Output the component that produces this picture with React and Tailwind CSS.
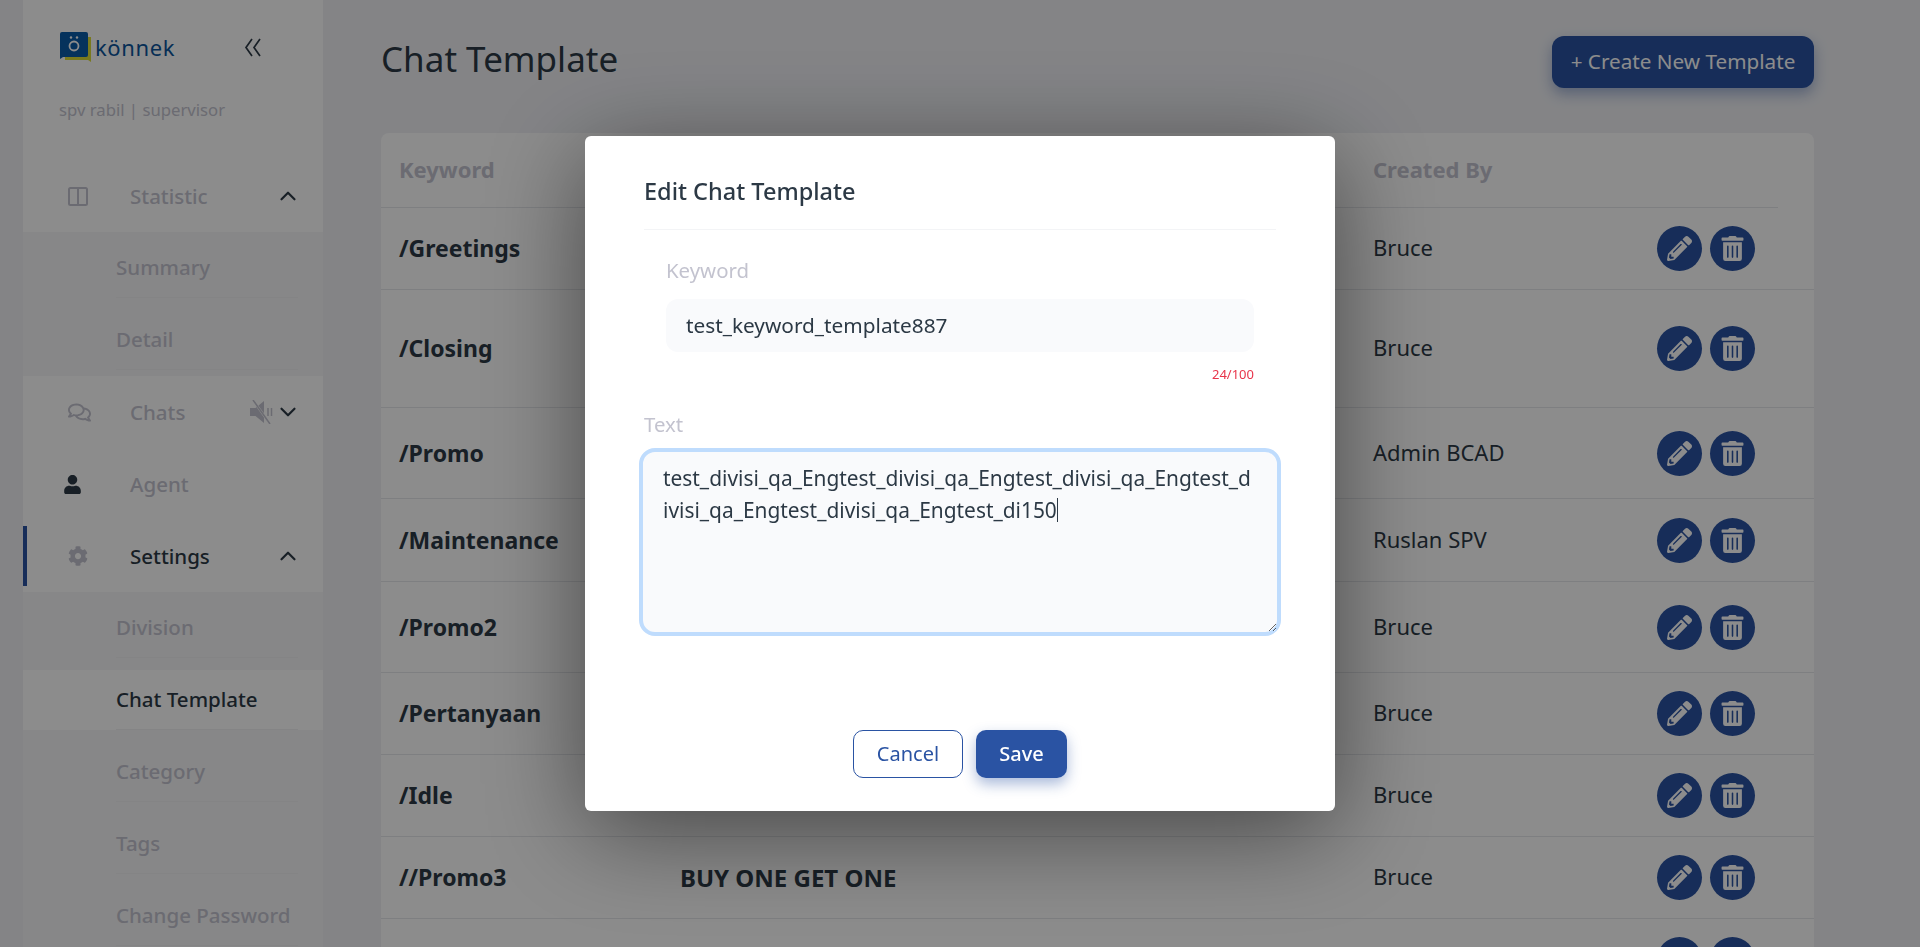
import React from "react";
import { FaCog, FaPencilAlt, FaRegComments, FaTrashAlt, FaUser } from "react-icons/fa";
import { ChevronDown, ChevronUp } from "lucide-react";

const rows = [
    { keyword: "/Greetings", author: "Bruce", height: "h-[82px]" },
    { keyword: "/Closing", author: "Bruce", height: "h-[118px]" },
    { keyword: "/Promo", author: "Admin BCAD", height: "h-[91px]" },
    { keyword: "/Maintenance", author: "Ruslan SPV", height: "h-[83px]" },
    { keyword: "/Promo2", author: "Bruce", height: "h-[91px]" },
    { keyword: "/Pertanyaan", author: "Bruce", height: "h-[82px]" },
    { keyword: "/Idle", author: "Bruce", height: "h-[82px]" },
    { keyword: "//Promo3", title: "BUY ONE GET ONE", author: "Bruce", height: "h-[82px]" },
    { keyword: "", author: "", height: "h-[82px]" },
];

const ColumnsIcon = () => (
    <svg width="20" height="19" viewBox="0 0 20 19" fill="none" stroke="currentColor" strokeWidth="2">
        <rect x="1" y="1" width="18" height="17" rx="1.5" />
        <path d="M10 1v17" />
    </svg>
);

const MuteIcon = () => (
    <svg width="24" height="24" viewBox="0 0 24 24">
        <path d="M0 8h5.500L14 1v22l-8.500-7H0z" fill="#c3c3cf" />
        <path d="M18 8v8M21.500 8v8" stroke="#c3c3cf" strokeWidth="1.500" />
        <path d="M3 0l17 24" stroke="#ffffff" strokeWidth="2.500" />
        <path d="M3 0l17 24" stroke="#c3c3cf" strokeWidth="1.500" />
    </svg>
);

const Logo = () => (
    <svg width="32" height="32" viewBox="0 0 32 32">
        <path d="M5 6h26v25l-3-2H5z" fill="#dcdc38" />
        <path d="M2 1h24a2 2 0 0 1 2 2v21a2 2 0 0 1-2 2H3l-3 2V3a2 2 0 0 1 2-2z" fill="#0a5ca8" />
        <circle cx="14" cy="15" r="4.500" fill="none" stroke="#ffffff" strokeWidth="1.800" />
        <circle cx="11" cy="6.500" r="1.200" fill="#ffffff" />
        <circle cx="17" cy="6.500" r="1.200" fill="#ffffff" />
    </svg>
);

function MenuRow({ icon, label, active, chevron, extra, iconClass = "" }) {
    return (
        <div className="h-[72px] py-[6px]">
            <div className={`h-[60px] flex items-center border-l-4 pl-[41px] pr-[22px] ${active ? "border-[#2a53a3]" : "border-transparent"}`}>
                <span className={`w-[62px] flex items-center text-[#c3c3cf] ${iconClass}`}>{icon}</span>
                <span className={`text-[20.500px] font-medium ${active ? "text-[#2c3945]" : "text-[#c3c3cf]"}`}>{label}</span>
                <span className="ml-auto flex items-center gap-[1px] text-[#2c3945]">
                    {extra}
                    {chevron === "up" && <ChevronUp size={26} strokeWidth={2} />}
                    {chevron === "down" && <ChevronDown size={26} strokeWidth={2} />}
                </span>
            </div>
        </div>
    );
}

function SubMenu({ items }) {
    return (
        <div className="bg-[#f6f6f7] py-[6px] flex flex-col gap-3">
            {items.map((item) => (
                <div key={item.label} className={`h-[60px] pl-[93px] pr-[25px] ${item.active ? "bg-white" : ""}`}>
                    <div className={`h-full flex items-center border-b border-[#f1f1f3] text-[20.500px] font-medium ${item.active ? "text-[#2c3945]" : "text-[#c3c3cf]"}`}>
                        {item.label}
                    </div>
                </div>
            ))}
        </div>
    );
}

function Sidebar() {
    return (
        <aside className="w-[300px] shrink-0 bg-white">
            <div className="h-[160px] pl-[37px] pt-[30px]">
                <div className="flex items-center h-[34px]">
                    <Logo />
                    <span className="ml-[3px] text-[22px] leading-none tracking-[0.6px] text-[#0b559c]">könnek</span>
                    <svg className="ml-[69px]" width="18" height="19" viewBox="0 0 18 19" fill="none" stroke="#2c3945" strokeWidth="1.700">
                        <path d="M8 1L2 9.500l6 8.500M16 1l-6 8.500 6 8.500" />
                    </svg>
                </div>
                <p className="mt-[34px] -ml-px text-[16.700px] leading-6 text-[#c3c3cf]">spv rabil | supervisor</p>
            </div>
            <MenuRow icon={<ColumnsIcon />} label="Statistic" chevron="up" />
            <SubMenu items={[{ label: "Summary" }, { label: "Detail" }]} />
            <MenuRow icon={<FaRegComments size={23} />} label="Chats" chevron="down" extra={<MuteIcon />} />
            <MenuRow icon={<FaUser size={19} className="text-[#2c3945] -ml-[5px]" />} label="Agent" />
            <MenuRow icon={<FaCog size={20} />} label="Settings" chevron="up" active />
            <SubMenu
                items={[
                    { label: "Division" },
                    { label: "Chat Template", active: true },
                    { label: "Category" },
                    { label: "Tags" },
                    { label: "Change Password" },
                ]}
            />
        </aside>
    );
}

function TemplateTable() {
    return (
        <div className="mt-[45px] bg-white rounded-lg">
            <div className="h-[75px] mr-[36px] pl-[18px] pb-[2px] flex items-center border-b border-[#e5e7eb] text-[22px] font-bold text-[#c3c3cf]">
                <span className="w-[281px]">Keyword</span>
                <span className="w-[693px]"></span>
                <span>Created By</span>
            </div>
            {rows.map((row, i) => (
                <div key={i} className={`${row.height} pl-[18px] flex items-center border-b border-[#e5e7eb] text-[22px] text-[#2c3945]`}>
                    <span className="w-[281px] text-[23px] font-bold">{row.keyword}</span>
                    <span className="w-[693px] text-[24px] font-bold">{row.title}</span>
                    <span className="w-[284px] pb-[2px]">{row.author}</span>
                    {[FaPencilAlt, FaTrashAlt].map((Icon, n) => (
                        <button key={n} className="w-[45px] h-[45px] mr-[8px] rounded-full bg-[#2a53a3] text-white flex items-center justify-center">
                            <Icon size={25} />
                        </button>
                    ))}
                </div>
            ))}
        </div>
    );
}

function EditModal() {
    return (
        <div className="fixed inset-0 bg-black/45 flex justify-center pt-[136px]">
            <div className="w-[750px] h-[675px] bg-white rounded-md shadow-[0_20px_100px_rgba(0,0,0,0.5)]">
                <div className="mx-[59px] pt-[41px] pb-[24px] border-b border-[#f3f4f6]">
                    <h2 className="text-[23.500px] leading-7 font-medium text-[#2c3945]">Edit Chat Template</h2>
                </div>
                <div className="mx-[81px] mt-[28px]">
                    <label className="block text-[20.400px] leading-6 text-[#c3c3cf]">Keyword</label>
                    <div className="mt-[17px] h-[53px] px-5 flex items-center rounded-xl bg-[#f9fafc] text-[20.800px] text-[#2c3945]">
                        test_keyword_template887
                    </div>
                    <div className="mt-[14px] text-right text-[13px] leading-4 text-[#e8344a]">24/100</div>
                </div>
                <div className="mx-[54px] mt-[30px]">
                    <label className="block ml-[5px] text-[20.400px] leading-6 text-[#c3c3cf]">Text</label>
                    <div className="mt-[12px] h-[188px] pl-[20px] pt-[10px] overflow-auto resize border-4 border-[#bfdcfd] rounded-2xl bg-[#f9fafc] text-[20.900px] leading-8 text-[#2c3945] whitespace-nowrap">
                        <div>test_divisi_qa_Engtest_divisi_qa_Engtest_divisi_qa_Engtest_d</div>
                        <div className="flex items-center">
                            ivisi_qa_Engtest_divisi_qa_Engtest_di150
                            <span className="w-px h-6 bg-[#2c3945]"></span>
                        </div>
                    </div>
                </div>
                <div className="mt-[94px] flex justify-center gap-[13px]">
                    <button className="w-[110px] h-[48px] rounded-[10px] border border-[#2a53a3] bg-white text-[20px] text-[#2a53a3]">Cancel</button>
                    <button className="w-[91px] h-[48px] rounded-[10px] bg-[#2a53a3] text-[20px] font-medium text-white shadow-[0_6px_14px_rgba(42,83,163,0.4)]">Save</button>
                </div>
            </div>
        </div>
    );
}

export default function App() {
    return (
        <div className="h-[947px] overflow-hidden flex pl-[23px] bg-[#f0f1f5] font-['Noto_Sans',sans-serif]">
            <Sidebar />
            <main className="flex-1 pl-[58px] pr-[106px] pt-[36px]">
                <div className="flex items-start justify-between">
                    <h1 className="text-[35px] leading-[46px] text-[#2c3945]">Chat Template</h1>
                    <button className="w-[262px] h-[52px] rounded-xl bg-[#2a53a3] text-[20.700px] text-white shadow-[0_6px_14px_rgba(42,83,163,0.4)]">
                        + Create New Template
                    </button>
                </div>
                <TemplateTable />
            </main>
            <EditModal />
        </div>
    );
}
